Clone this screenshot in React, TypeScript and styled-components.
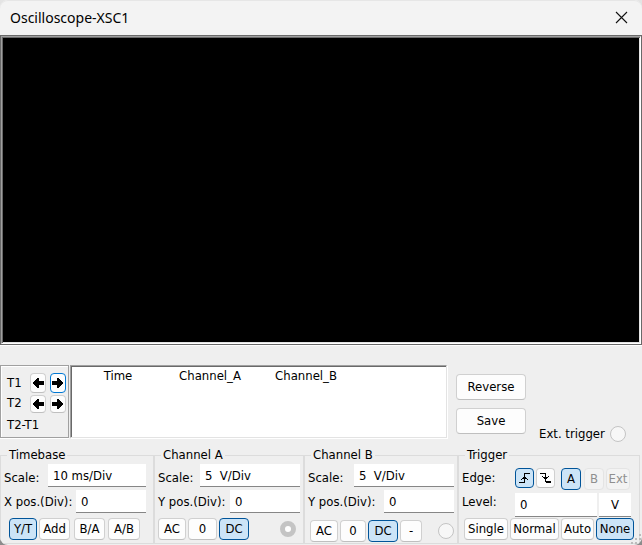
import React from "react";
import styled, { createGlobalStyle, css } from "styled-components";

const Global = createGlobalStyle`
  * { box-sizing: border-box; }
  body {
    margin: 0;
    background: linear-gradient(#e4e4e4, #8c8c8c);
    color: #000;
    font-family: "DejaVu Sans Condensed", "Noto Sans", sans-serif;
    font-size: 13px;
    line-height: 16px;
  }
  button, input { font: inherit; color: inherit; margin: 0; }
`;

const Window = styled.main`
  display: flex;
  flex-direction: column;
  min-height: 100vh;
  position: relative;
  background: #efefef;
  border-radius: 8px;
  overflow: hidden;
`;

const TitleBar = styled.header`
  display: flex;
  align-items: center;
  justify-content: space-between;
  height: 35px;
  padding: 0 10px;
  background: #f3f3f3;
  border-radius: 8px 8px 0 0;
  box-shadow: inset 0 1px 0 #e6e6e6;
`;

const Title = styled.h1`
  margin: 0;
  font: 400 14px/20px "Noto Sans", sans-serif;
`;

const CloseButton = styled.button`
  display: flex;
  padding: 4px;
  border: 0;
  background: none;
`;

const Screen = styled.section`
  display: flex;
  flex: 1;
  min-height: 200px;
  border: 1px solid #696969;
  box-shadow: 0 1px 0 #fff;
`;

const ScreenGlass = styled.div`
  flex: 1;
  border: 1px solid;
  border-color: #a0a0a0 #fff #fff #a0a0a0;
  background: #000;
  box-shadow: inset 1px 1px 0 #696969, inset -1px -1px 0 #e3e3e3;
`;

const Measurements = styled.section`
  display: flex;
  height: 73px;
  margin: 20px 0 9px;
`;

const Cursors = styled.div`
  display: grid;
  grid-template-columns: 19px 16px 16px;
  grid-template-rows: 20px 18px 20px;
  column-gap: 4px;
  row-gap: 2px;
  align-content: start;
  width: 69px;
  padding: 7px 3px 0 6px;
  border: 1px solid #a0a0a0;
  box-shadow: inset 1px 1px 0 #fff, 0 1px 0 #fff;
`;

const CursorLabel = styled.span<{ $wide?: boolean; $start?: boolean }>`
  grid-column: ${(p) => (p.$wide ? "1 / -1" : "1")};
  align-self: ${(p) => (p.$start ? "start" : "center")};
`;

const Readout = styled.div`
  flex: 0 1 377px;
  margin-left: 1px;
  padding-left: 16px;
  background: #fff;
  border: 1px solid #a0a0a0;
  border-color: #a0a0a0 #e3e3e3 #e3e3e3 #a0a0a0;
  box-shadow: inset 1px 1px 0 #696969, 1px 1px 0 #fff;
`;

const ReadoutTable = styled.table`
  table-layout: fixed;
  width: 254px;
  border-collapse: collapse;
`;

const ReadoutHead = styled.th<{ $w: number }>`
  width: ${(p) => p.$w}px;
  padding: 2px 0;
  font-weight: 400;
  text-align: center;
`;

const Actions = styled.div`
  display: grid;
  grid-template-columns: 70px auto;
  grid-template-rows: 26px 26px;
  align-content: start;
  gap: 8px 13px;
  flex: 1;
  padding: 9px 0 0 9px;
  > button { grid-column: 1; }
`;

const ExtTrigger = styled.label`
  grid-column: 2;
  grid-row: 2;
  display: flex;
  align-items: center;
  gap: 5px;
  align-self: end;
  height: 16px;
  margin-bottom: -8px;
  white-space: nowrap;
`;

const Groups = styled.form`
  display: grid;
  grid-template-columns: 154fr 150fr 154fr 182fr;
  padding: 0 2px 1px 0;
`;

const Group = styled.fieldset<{ $right?: number }>`
  min-width: 0;
  margin: 0;
  padding: 0 ${(p) => p.$right ?? 3}px 1px 3px;
  border: 1px solid #dcdcdc;
`;

const Legend = styled.legend`
  height: 16px;
  margin-left: 3px;
  padding: 0 2px;
`;

const Row = styled.div<{ $top?: number; $inset?: number; $right?: number; $center?: boolean }>`
  display: flex;
  align-items: ${(p) => (p.$center ? "center" : "flex-start")};
  margin-top: ${(p) => p.$top ?? 1}px;
  padding: 0 ${(p) => p.$right ?? 0}px 0 ${(p) => p.$inset ?? 0}px;
`;

const FieldLabel = styled.label<{ $top?: number }>`
  flex: 1;
  min-width: 0;
  padding-top: ${(p) => p.$top ?? 6}px;
  white-space: nowrap;
`;

const EdgeLabel = styled.span`
  width: 51px;
  padding-top: 2px;
`;

const Field = styled.input<{ $w: number; $h?: number; $center?: boolean; $gap?: number }>`
  flex: none;
  width: ${(p) => p.$w}px;
  height: ${(p) => p.$h ?? 23}px;
  margin-left: ${(p) => p.$gap ?? 0}px;
  padding: 0 5px;
  border: 0;
  border-bottom: 1px solid #868686;
  background: #fff;
  text-align: ${(p) => (p.$center ? "center" : "left")};
`;

const Button = styled.button<{ $w?: number; $h?: number; $gap?: number; $on?: boolean; $focus?: boolean }>`
  display: flex;
  align-items: center;
  justify-content: center;
  flex: none;
  width: ${(p) => (p.$w ? `${p.$w}px` : "100%")};
  height: ${(p) => p.$h ?? 22}px;
  margin-left: ${(p) => p.$gap ?? 0}px;
  padding: 0;
  border: 1px solid #d0d0d0;
  border-bottom-color: #bfbfbf;
  border-radius: 4px;
  background: #fdfdfd;
  white-space: nowrap;
  ${(p) => p.$on && css`border-color: #005499; background: #cce4f7;`}
  ${(p) => p.$focus && css`border-color: #0078d4;`}
  &:disabled { color: #8f8f8f; border-color: #e4e4e4; background: #f3f3f3; }
`;

const Radio = styled.input<{ $push?: boolean }>`
  appearance: none;
  flex: none;
  width: 16px;
  height: 16px;
  margin-left: ${(p) => (p.$push ? "auto" : "0")};
  border: 1px solid #c4c4c4;
  border-radius: 50%;
  background: #f7f7f7;
  &:checked { border: 5px solid #c4c4c4; background: #fff; }
`;

const Grip = styled.svg`
  position: absolute;
  right: 0;
  bottom: 0;
`;

const Arrow = ({ right = false }: { right?: boolean }) => (
  <svg width="12" height="12" viewBox="0 0 12 12" shapeRendering="crispEdges" aria-hidden="true">
    <path
      d={right
        ? "M0 4h5V1h2v1h1v1h1v1h1v1h1v2h-1v1H9v1H8v1H7v1H5V8H0z"
        : "M12 4H7V1H5v1H4v1H3v1H2v1H1v2h1v1h1v1h1v1h1v1h2V8h5z"}
    />
  </svg>
);

const EdgeIcon = ({ falling = false }: { falling?: boolean }) => (
  <svg width="12" height="12" viewBox="0 0 12 12" shapeRendering="crispEdges" aria-hidden="true">
    {falling ? (
      <path d="M0 1h6v1H0zM5 1h1v8H5zM2 4h1v1H2zM8 4h1v1H8zM3 5h5v1H3zM4 6h3v1H4zM5 9h6v2H6V10H5z" />
    ) : (
      <path d="M0 10h6v1H0zM5 1h1v10H5zM5 1h6v1H5zM4 5h3v1H4zM3 6h5v1H3zM2 7h1v1H2zM8 7h1v1H8z" />
    )}
  </svg>
);

type ChannelProps = {
  id: string;
  inset: number;
  right: number;
  top: number;
  buttons: [string, number, number][];
  checked?: boolean;
};

const Channel = ({ id, inset, right, top, buttons, checked }: ChannelProps) => (
  <Group>
    <Legend>Channel {id}</Legend>
    <Row>
      <FieldLabel htmlFor={`scale${id}`}>Scale:</FieldLabel>
      <Field id={`scale${id}`} $w={100} defaultValue="5  V/Div" />
    </Row>
    <Row $top={3}>
      <FieldLabel $top={4} htmlFor={`pos${id}`}>Y pos.(Div):</FieldLabel>
      <Field id={`pos${id}`} $w={70} defaultValue="0" />
    </Row>
    <Row $center $top={top} $inset={inset} $right={right}>
      {buttons.map(([text, width, gap]) => (
        <Button key={text} type="button" $w={width} $gap={gap} $on={text === "DC"} aria-pressed={text === "DC"}>{text}</Button>
      ))}
      <Radio $push type="radio" name={`probe${id}`} aria-label={`Channel ${id} input`} defaultChecked={checked} />
    </Row>
  </Group>
);

export default function App() {
  return (
    <>
      <Global />
      <Window>
        <TitleBar>
          <Title>Oscilloscope-XSC1</Title>
          <CloseButton type="button" aria-label="Close">
            <svg width="13" height="13" viewBox="0 0 13 13" aria-hidden="true">
              <path d="M1 1l11 11M12 1L1 12" stroke="#111" strokeWidth="1.1" />
            </svg>
          </CloseButton>
        </TitleBar>
        <Screen aria-label="Display">
          <ScreenGlass />
        </Screen>
        <Measurements>
          <Cursors>
            <CursorLabel>T1</CursorLabel>
            <Button type="button" $h={20} aria-label="T1 left"><Arrow /></Button>
            <Button type="button" $h={20} $focus aria-label="T1 right"><Arrow right /></Button>
            <CursorLabel $start>T2</CursorLabel>
            <Button type="button" $h={18} aria-label="T2 left"><Arrow /></Button>
            <Button type="button" $h={18} aria-label="T2 right"><Arrow right /></Button>
            <CursorLabel $wide>T2-T1</CursorLabel>
          </Cursors>
          <Readout>
            <ReadoutTable>
              <thead>
                <tr>
                  <ReadoutHead $w={62}>Time</ReadoutHead>
                  <ReadoutHead $w={122}>Channel_A</ReadoutHead>
                  <ReadoutHead $w={70}>Channel_B</ReadoutHead>
                </tr>
              </thead>
            </ReadoutTable>
          </Readout>
          <Actions>
            <Button type="button" $h={26}>Reverse</Button>
            <Button type="button" $h={26}>Save</Button>
            <ExtTrigger>Ext. trigger <Radio type="radio" name="ext" /></ExtTrigger>
          </Actions>
        </Measurements>
        <Groups>
          <Group $right={7}>
            <Legend>Timebase</Legend>
            <Row>
              <FieldLabel htmlFor="scale">Scale:</FieldLabel>
              <Field id="scale" $w={98} defaultValue="10 ms/Div" />
            </Row>
            <Row $top={3}>
              <FieldLabel $top={4} htmlFor="xpos">X pos.(Div):</FieldLabel>
              <Field id="xpos" $w={70} defaultValue="0" />
            </Row>
            <Row $top={5} $inset={5}>
              <Button type="button" $w={28} $on aria-pressed>Y/T</Button>
              <Button type="button" $w={31} $gap={2}>Add</Button>
              <Button type="button" $w={31} $gap={4}>B/A</Button>
              <Button type="button" $w={32} $gap={3}>A/B</Button>
            </Row>
          </Group>
          <Channel id="A" inset={0} right={4} top={5} checked buttons={[["AC", 28, 0], ["0", 29, 2], ["DC", 30, 2]]} />
          <Channel id="B" inset={2} right={0} top={7} buttons={[["AC", 28, 0], ["0", 26, 2], ["DC", 30, 2], ["-", 22, 2]]} />
          <Group>
            <Legend>Trigger</Legend>
            <Row $top={5}>
              <EdgeLabel>Edge:</EdgeLabel>
              <Button type="button" $w={19} $h={20} $gap={2} $on aria-label="Rising edge"><EdgeIcon /></Button>
              <Button type="button" $w={19} $h={20} $gap={2} aria-label="Falling edge"><EdgeIcon falling /></Button>
              <Button type="button" $w={20} $gap={6} $on aria-pressed>A</Button>
              <Button type="button" $w={20} $gap={3} disabled>B</Button>
              <Button type="button" $w={24} $gap={2} disabled>Ext</Button>
            </Row>
            <Row $top={3} $right={5}>
              <FieldLabel $top={1} htmlFor="level">Level:</FieldLabel>
              <Field id="level" $w={82} $h={24} defaultValue="0" />
              <Field $w={32} $h={24} $gap={2} $center aria-label="Level unit" defaultValue="V" />
            </Row>
            <Row $top={1} $inset={2}>
              <Button type="button" $w={44}>Single</Button>
              <Button type="button" $w={49} $gap={2}>Normal</Button>
              <Button type="button" $w={33} $gap={2}>Auto</Button>
              <Button type="button" $w={38} $gap={2} $on aria-pressed>None</Button>
            </Row>
          </Group>
        </Groups>
        <Grip width="12" height="12" viewBox="0 0 12 12" aria-hidden="true">
          <path d="M9 1h2v2H9zM5 5h2v2H5zM9 5h2v2H9zM1 9h2v2H1zM5 9h2v2H5zM9 9h2v2H9z" fill="#bcbcbc" />
        </Grip>
      </Window>
    </>
  );
}
